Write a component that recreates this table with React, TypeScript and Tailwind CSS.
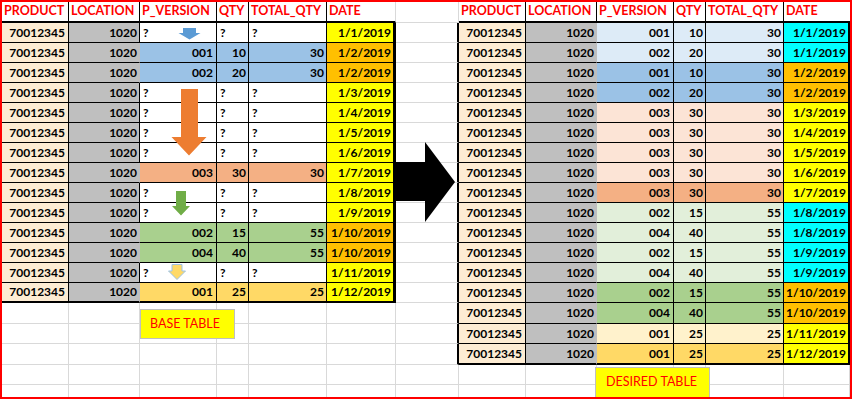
import React from 'react';

const Y = 'bg-[#ffff00]';
const O = 'bg-[#ffc000]';
const C = 'bg-[#00ffff]';
const BLUE = 'bg-[#9bc2e6]';
const LBLUE = 'bg-[#ddebf7]';
const PEACH = 'bg-[#f4b084]';
const LPEACH = 'bg-[#fce4d6]';
const GREEN = 'bg-[#a9d08e]';
const LGREEN = 'bg-[#e2efda]';
const GOLD = 'bg-[#ffd966]';
const LGOLD = 'bg-[#fff2cc]';
const PRODUCT = 'bg-[#fdecd3]';
const LOC = 'bg-[#bfbfbf]';

type Row = { v?: [string, string, string]; bg?: string; date: string; dc: string };

const left: Row[] = [
  { date: '1/1/2019', dc: Y },
  { v: ['001', '10', '30'], bg: BLUE, date: '1/2/2019', dc: O },
  { v: ['002', '20', '30'], bg: BLUE, date: '1/2/2019', dc: O },
  { date: '1/3/2019', dc: Y },
  { date: '1/4/2019', dc: Y },
  { date: '1/5/2019', dc: Y },
  { date: '1/6/2019', dc: Y },
  { v: ['003', '30', '30'], bg: PEACH, date: '1/7/2019', dc: Y },
  { date: '1/8/2019', dc: Y },
  { date: '1/9/2019', dc: Y },
  { v: ['002', '15', '55'], bg: GREEN, date: '1/10/2019', dc: O },
  { v: ['004', '40', '55'], bg: GREEN, date: '1/10/2019', dc: O },
  { date: '1/11/2019', dc: Y },
  { v: ['001', '25', '25'], bg: GOLD, date: '1/12/2019', dc: Y },
];

const right: Row[] = [
  { v: ['001', '10', '30'], bg: LBLUE, date: '1/1/2019', dc: C },
  { v: ['002', '20', '30'], bg: LBLUE, date: '1/1/2019', dc: C },
  { v: ['001', '10', '30'], bg: BLUE, date: '1/2/2019', dc: O },
  { v: ['002', '20', '30'], bg: BLUE, date: '1/2/2019', dc: O },
  { v: ['003', '30', '30'], bg: LPEACH, date: '1/3/2019', dc: Y },
  { v: ['003', '30', '30'], bg: LPEACH, date: '1/4/2019', dc: Y },
  { v: ['003', '30', '30'], bg: LPEACH, date: '1/5/2019', dc: Y },
  { v: ['003', '30', '30'], bg: LPEACH, date: '1/6/2019', dc: Y },
  { v: ['003', '30', '30'], bg: PEACH, date: '1/7/2019', dc: Y },
  { v: ['002', '15', '55'], bg: LGREEN, date: '1/8/2019', dc: C },
  { v: ['004', '40', '55'], bg: LGREEN, date: '1/8/2019', dc: C },
  { v: ['002', '15', '55'], bg: LGREEN, date: '1/9/2019', dc: C },
  { v: ['004', '40', '55'], bg: LGREEN, date: '1/9/2019', dc: C },
  { v: ['002', '15', '55'], bg: GREEN, date: '1/10/2019', dc: O },
  { v: ['004', '40', '55'], bg: GREEN, date: '1/10/2019', dc: O },
  { v: ['001', '25', '25'], bg: LGOLD, date: '1/11/2019', dc: Y },
  { v: ['001', '25', '25'], bg: GOLD, date: '1/12/2019', dc: Y },
];

const headers = ['PRODUCT', 'LOCATION', 'P_VERSION', 'QTY', 'TOTAL_QTY', 'DATE'];

type Cell = { cls: string; text?: string };

const HDR = 'bg-white text-[#ff0000] text-[12.5px] justify-start pl-0.5 border-b-2 border-b-black';

function buildRow(r: number): Cell[] {
  const out: Cell[] = [];
  const gb = r === 19 ? '' : 'border-b border-b-[#d9d9d9]';
  // left area
  if (r === 0) {
    headers.forEach((h, i) =>
      out.push({
        cls: `${HDR} border-r ${i < 5 ? 'border-r-black' : 'border-r-[#d9d9d9]'}`,
        text: h,
      })
    );
  } else if (r <= 14) {
    const row = left[r - 1];
    const q = !row.v;
    const b = r === 14 ? 'border-b-2 border-b-black' : 'border-b border-b-black';
    out.push({ cls: `${PRODUCT} justify-end pr-[3px] border-r border-r-black ${b}`, text: '70012345' });
    out.push({
      cls: `${LOC} justify-end pr-0.5 border-r ${q ? 'border-r-black' : 'border-r-[#bfbfbf]'} ${b}`,
      text: '1020',
    });
    for (let i = 0; i < 3; i++) {
      out.push(
        q
          ? { cls: `bg-white justify-start pl-[3px] border-r border-r-black ${b}`, text: '?' }
          : { cls: `${row.bg} justify-end ${i === 0 ? 'pr-[3px]' : 'pr-0.5'} border-r border-r-black ${b}`, text: row.v![i] }
      );
    }
    out.push({ cls: `${row.dc} justify-end pr-0.5 border-r-[3px] border-r-black ${b}`, text: row.date });
  } else {
    for (let i = 0; i < 6; i++) out.push({ cls: `border-r border-r-[#d9d9d9] ${gb}` });
  }
  // gap column + right area
  if (r === 0) {
    out.push({ cls: 'border-r border-b border-[#d9d9d9]' });
    headers.forEach((h, i) =>
      out.push({
        cls: `${HDR} ${i < 5 ? 'border-r border-r-black' : ''}`,
        text: h,
      })
    );
  } else if (r <= 17) {
    const row = right[r - 1];
    const b = r === 17 ? 'border-b-2 border-b-black' : 'border-b border-b-black';
    out.push({ cls: 'border-r-2 border-r-black border-b border-b-[#d9d9d9]' });
    out.push({ cls: `${PRODUCT} justify-end pr-[3px] border-r border-r-black ${b}`, text: '70012345' });
    out.push({ cls: `${LOC} justify-end pr-0.5 border-r border-r-[#bfbfbf] ${b}`, text: '1020' });
    for (let i = 0; i < 3; i++) {
      out.push({
        cls: `${row.bg} justify-end ${i === 0 ? 'pr-[3px]' : 'pr-0.5'} border-r border-r-black ${b}`,
        text: row.v![i],
      });
    }
    out.push({ cls: `${row.dc} justify-end pr-0.5 border-r-2 border-r-black ${b}`, text: row.date });
  } else {
    for (let i = 0; i < 7; i++) out.push({ cls: `border-r border-r-[#d9d9d9] ${gb}` });
  }
  return out;
}

export default function App() {
  const rows = Array.from({ length: 20 }, (_, r) => buildRow(r));
  return (
    <div className="relative w-[852px] h-[399px] overflow-hidden border-2 border-[#ff0000] bg-white font-['Lato',sans-serif] text-[12px] font-bold leading-none text-black">
      <div className="grid grid-cols-[67px_71px_77px_32px_78px_69px_63px_67px_71px_77px_32px_78px_66px] grid-rows-[21px_repeat(14,20px)_21px_20px_21px_20px_12px]">
        {rows.map((cells, r) =>
          cells.map((c, i) => (
            <div key={`${r}-${i}`} className={`flex items-center overflow-hidden whitespace-nowrap ${c.cls}`}>
              {c.text}
            </div>
          ))
        )}
      </div>

      <svg
        className="pointer-events-none absolute left-0 top-0"
        width={848}
        height={395}
        viewBox="2 2 848 395"
      >
        <polygon points="183,28 196,28 196,33 200.5,33 189.5,39.5 178.5,33 183,33" fill="#5b9bd5" />
        <polygon points="181,89 198,89 198,137 206.5,137 189,155.5 171.5,137 181,137" fill="#ed7d31" />
        <polygon points="176,191 186,191 186,206 190,206 181,215.5 172,206 176,206" fill="#70ad47" />
        <polygon
          points="172,264.5 182,264.5 182,271 185.5,271 177,279.5 168.5,271 172,271"
          fill="#ffd966"
          stroke="#9dc3e6"
          strokeWidth={1}
        />
        <polygon points="396,162 425,162 425,142 455,182 425,222 425,201 396,201" fill="#000000" />
      </svg>

      <div className="absolute left-[138px] top-[307px] flex h-[30px] w-[95px] items-center border border-[#bfbfbf] bg-[#ffff00] pl-[9px] text-[12.5px] font-normal text-[#ff0000]">
        BASE TABLE
      </div>
      <div className="absolute left-[593px] top-[365px] flex h-[32px] w-[115px] items-center border border-[#bfbfbf] bg-[#ffff00] pl-[10px] pb-[2px] text-[12.5px] font-normal text-[#ff0000]">
        DESIRED TABLE
      </div>
    </div>
  );
}
